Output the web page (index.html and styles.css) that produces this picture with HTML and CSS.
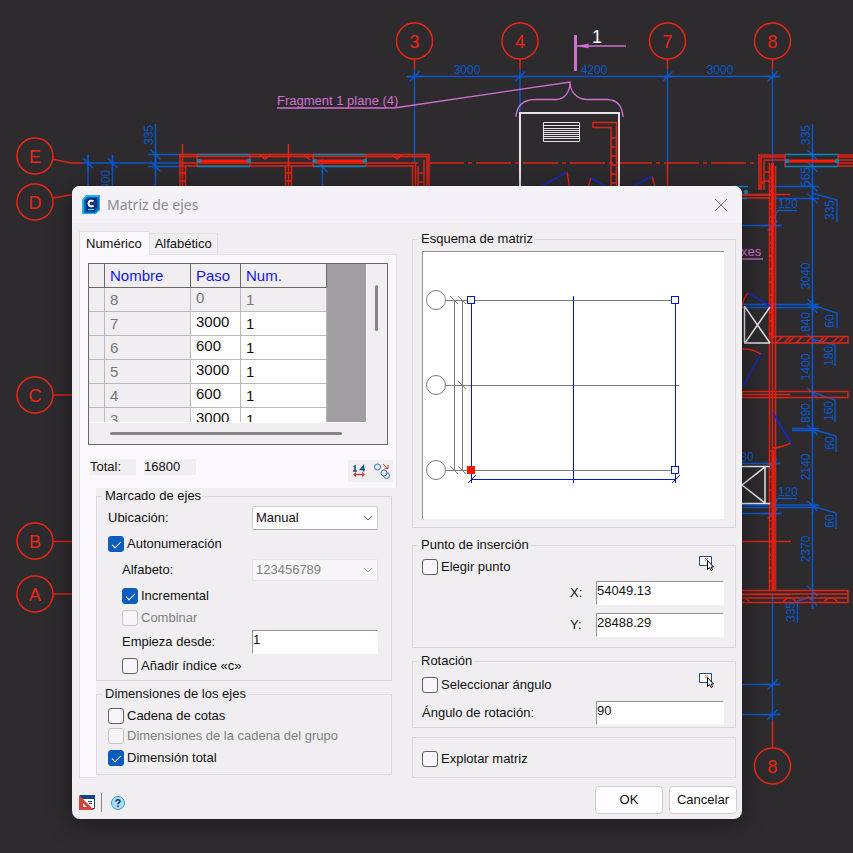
FILE: index.html
```html
<!DOCTYPE html>
<html lang="es">
<head>
    <meta charset="UTF-8">
    <meta name="viewport" content="width=device-width, initial-scale=1.0">
    <title>Matriz de ejes</title>
    <link rel="stylesheet" href="styles.css">
</head>
<body>

    <!-- Floor plan behind the dialog -->
    <svg class="drawing" viewBox="0 0 853 853" preserveAspectRatio="xMinYMin slice" aria-hidden="true">
        <defs>
            <path id="tick" d="M-5 5L5 -5M-8 0H8"/>
            <path id="tickv" d="M-5 -5L5 5M0 -8V8"/>
            <pattern id="hatch" width="13" height="13" patternUnits="userSpaceOnUse">
                <path d="M0 0H4M0 9H4" class="wall"/>
            </pattern>
        </defs>

        <!-- vertical and horizontal dimension lines -->
        <g class="dim">
            <path d="M407 76.500H780M414.500 69V163M520 69V113M667.500 69V163M772.500 69V163M772.500 594V721"/>
            <path d="M81 163H180M88 155V190M112.500 155V190M155.500 124V190M148 154.500H180M148 166.500H180M322.500 163V190"/>
            <path d="M742 195H772M770 186.500H819M772 198.500H819M742 225.500H782M812.500 124V609M742 304.500H819M742 307.500H819"/>
            <path d="M812 193L837 200V222M812 305L837 313V328M812 339L835 345V366M812 392L835 400V422M812 429L836 436V452M812 506L836 513V529"/>
            <path d="M792 428.500H819M792 430.500H816M742 463.500H777M742 505H819M742 507.500H819M742 513.500H782"/>
            <path d="M772 222L778 210.500H797M772 513L777 498.500H797M797.500 601V623M797 601L812 597"/>
            <path d="M742 684.500H780M742 714.500H780"/>
            <use href="#tick" x="414.500" y="76.500"/>
            <use href="#tick" x="520" y="76.500"/>
            <use href="#tick" x="667.500" y="76.500"/>
            <use href="#tick" x="772.500" y="76.500"/>
            <use href="#tick" x="772.500" y="225.500"/>
            <use href="#tick" x="772.500" y="513.500"/>
            <use href="#tick" x="772.500" y="684.500"/>
            <use href="#tick" x="772.500" y="714.500"/>
            <use href="#tick" x="772.500" y="463.500"/>
            <use href="#tickv" x="88" y="163"/>
            <use href="#tickv" x="112.500" y="163"/>
            <use href="#tickv" x="155.500" y="154.500"/>
            <use href="#tickv" x="155.500" y="166.500"/>
            <use href="#tickv" x="322.500" y="167"/>
            <use href="#tickv" x="812.500" y="155"/>
            <use href="#tickv" x="812.500" y="167"/>
            <use href="#tickv" x="812.500" y="186.500"/>
            <use href="#tickv" x="812.500" y="198.500"/>
            <use href="#tickv" x="812.500" y="304"/>
            <use href="#tickv" x="812.500" y="308"/>
            <use href="#tickv" x="812.500" y="339"/>
            <use href="#tickv" x="812.500" y="393"/>
            <use href="#tickv" x="812.500" y="430"/>
            <use href="#tickv" x="812.500" y="506"/>
            <use href="#tickv" x="812.500" y="591"/>
            <use href="#tickv" x="812.500" y="601"/>
        </g>

        <!-- walls -->
        <g class="wall">
            <path class="axis" d="M52 159L71 163H82"/>
            <path d="M53 198L76 194M53 395H76M53 541.500H76M53 594H76"/>
            <path d="M179 154.500H429V190M179 156.500H427V190M179 163H418M179 166H414M180 154V190M182.500 144V190M185.500 166V190"/>
            <path d="M197 154V167M250 154V167M288.500 144V190M285.500 166V190M291.500 166V190M313 154V167M366 154V167"/>
            <path d="M179 173H186M179 181H186M285 173H292M285 181H292M412.500 166V190M415.500 163V190M418 166V190M424 160V190M418 173H424M418 182H424"/>
            <path d="M260 155L265 159L270 155M304 155L310 160M392 155L397 159L402 155"/>
            <path d="M414.500 59V69M520 59V69M667.500 59V69M772.500 59V69M667.500 163V190M772.500 721V748"/>
            <path stroke-dasharray="35 4 4 4" d="M429 163H759"/>
            <path d="M759 190V155H785M761 190V157H785M764 190V160H784M768 195H742M764 172H770M764 181H770M759 188L764 180M742 198H769M742 194.500H790"/>
            <path d="M785 154V167M838 154V167M838 155H853M838 157H853M838 160H853M838 163H853M838 166H853"/>
            <path class="wall-heavy" d="M772.500 163V338M773 450V590"/>
            <path d="M769.500 163V590M775.500 166V590M772.500 338V450"/>
            <path d="M593 122.500H616.500V190M594 127.500H611V190M593 122V128M611 138H616M611 147H616M611 156H616M611 165H616M611 174H616M611 183H616"/>
            <path d="M772 336.500H848V343H772ZM742 391.500H848V397.500H742ZM742 394.500H790M742 541.500H791"/>
            <path d="M742 590.500H848V602.500H742M742 594H848M742 598H848M742 594.500H790"/>
            <path d="M776 343L782 337M784 343L790 337M788 343L794 337M796 343L802 337M806 343L812 337M818 343L824 337M822 343L828 337M832 343L838 337M838 343L844 337"/>
            <path d="M745 598L750 602M783 602L787 598H792L796 602M824 602L828 598H833L838 602"/>
            <path d="M742 308Q743 298 748 293M743 349Q753 349 761 354M773 448Q783 447 791 443M567 172L570 190M587 190L591 178M652 176L656 190"/>
            <path class="glazing-bar" d="M199 161H248M315 161H364M787 161H836"/>
        </g>
        <g fill="url(#hatch)">
            <path d="M770 166H776V338H770ZM770 450H776V590H770Z"/>
        </g>

        <!-- windows and doors -->
        <g class="window">
            <path d="M197 154.500H250M197 166.500H250M313 154.500H366M313 166.500H366M785 154.500H838M785 166.500H838M734 186.500H748M742 198.500H747"/>
            <circle cx="199" cy="161" r="1.500"/>
            <circle cx="249" cy="161" r="1.500"/>
            <circle cx="315" cy="161" r="1.500"/>
            <circle cx="365" cy="161" r="1.500"/>
            <circle cx="787" cy="161" r="1.500"/>
            <circle cx="837" cy="161" r="1.500"/>
            <circle cx="746" cy="192" r="1.500"/>
        </g>
        <path class="door" d="M540 187L567 172M591 178L612 190M630 188L652 176M748 293L770 306M761 354L743 386M773 413L791 443"/>
        <g class="fixture">
            <path stroke-width="2" d="M520 190V113H619V190"/>
            <path d="M543.500 122.500H579.500V141.500H543.500ZM543 125.500H580M543 128.500H580M543 130.500H580M543 132.500H580M543 134.500H580M543 136.500H580M543 138.500H580"/>
            <path stroke-width="1.500" d="M744.500 306V342M744 343H770M745 307L770 343M770 307L745 343"/>
            <path stroke-width="1.500" d="M742 466.500H770M765 467V503M742 503.500H770M765 467L742 485L765 503"/>
        </g>

        <!-- notes -->
        <g class="note">
            <path d="M277 108H394L570 82C570 92 565 99 556 99.500H535Q517 100 516 117M570 82C570 92 577 99 586 99.500H607Q622 100 623 117"/>
            <path stroke-width="3" d="M575.500 35V71"/>
            <path d="M577 46H626"/>
            <path fill="#d06fd0" d="M579 46L588 44.500V47.500Z"/>
            <path d="M742 259H763"/>
        </g>
        <text class="note-text" x="277" y="105">Fragment 1 plane (4)</text>
        <text class="note-text" x="741" y="256">xes</text>
        <text class="section-text" x="597" y="43">1</text>

        <!-- dimension values -->
        <g class="dim-text">
            <text x="467" y="74">3000</text>
            <text x="594" y="74">4200</text>
            <text x="720" y="74">3000</text>
            <text x="788" y="208">120</text>
            <text x="788" y="496">120</text>
            <text x="747" y="461">80</text>
            <text transform="translate(153 135) rotate(-90)">335</text>
            <text transform="translate(110 180) rotate(-90)">900</text>
            <text transform="translate(810 135) rotate(-90)">335</text>
            <text transform="translate(810 177) rotate(-90)">565</text>
            <text transform="translate(834 210) rotate(-90)">335</text>
            <text transform="translate(810 276) rotate(-90)">3040</text>
            <text transform="translate(834 321) rotate(-90)">60</text>
            <text transform="translate(810 322) rotate(-90)">840</text>
            <text transform="translate(833 356) rotate(-90)">180</text>
            <text transform="translate(810 367) rotate(-90)">1400</text>
            <text transform="translate(833 411) rotate(-90)">160</text>
            <text transform="translate(810 413) rotate(-90)">890</text>
            <text transform="translate(834 443) rotate(-90)">60</text>
            <text transform="translate(810 467) rotate(-90)">2140</text>
            <text transform="translate(834 521) rotate(-90)">60</text>
            <text transform="translate(810 549) rotate(-90)">2370</text>
            <text transform="translate(795 612) rotate(-90)">335</text>
        </g>

        <!-- axis bubbles -->
        <g class="bubble">
            <circle cx="414.500" cy="41" r="18"/>
            <circle cx="520" cy="41" r="18"/>
            <circle cx="667.500" cy="41" r="18"/>
            <circle cx="772.500" cy="41" r="18"/>
            <circle cx="35" cy="156" r="18"/>
            <circle cx="35" cy="202" r="18"/>
            <circle cx="35" cy="395" r="18"/>
            <circle cx="35" cy="541" r="18"/>
            <circle cx="35" cy="594" r="18"/>
            <circle cx="772.500" cy="766" r="18"/>
        </g>
        <g class="bubble-text">
            <text x="414.500" y="48">3</text>
            <text x="520" y="48">4</text>
            <text x="667.500" y="48">7</text>
            <text x="772.500" y="48">8</text>
            <text x="35" y="163">E</text>
            <text x="35" y="209">D</text>
            <text x="35" y="402">C</text>
            <text x="35" y="548">B</text>
            <text x="35" y="601">A</text>
            <text x="772.500" y="773">8</text>
        </g>
    </svg>

    <main class="desktop">
        <form class="dialog" id="axisForm">

            <header class="titlebar">
                <svg class="app-icon" viewBox="0 0 18 19" aria-hidden="true">
                    <path fill="#19b5e5" d="M4 0H18V15L14 19H0V5Z"/>
                    <path fill="#0a5fb4" d="M5 2H17V14L13 18H2V5Z"/>
                    <path fill="#0a2f86" d="M6 3H15V13L12 16H4V6Z"/>
                    <path fill="none" stroke="#fff" stroke-width="2" d="M11.500 6.500C10 5 6.500 5.500 6.500 8.500S10 12 11.500 10.500"/>
                    <path stroke="#5ad1f0" d="M6 14.500H12"/>
                </svg>
                <h1>Matriz de ejes</h1>
                <button type="button" class="close" aria-label="Cerrar">
                    <svg viewBox="0 0 12 12"><path d="M0 0L12 12M12 0L0 12"/></svg>
                </button>
            </header>

            <div class="columns">
                <section class="left">
                    <div class="tabs" role="tablist">
                        <button type="button" role="tab" class="tab active" aria-selected="true">Numérico</button>
                        <button type="button" role="tab" class="tab" aria-selected="false">Alfabético</button>
                    </div>

                    <div class="panel">
                        <div class="panel-top">
                            <div class="grid-box">
                                <div class="grid-view">
                                    <table class="axes">
                                        <colgroup><col class="col-mark"><col class="col-name"><col class="col-step"><col class="col-num"></colgroup>
                                        <thead>
                                            <tr><th></th><th>Nombre</th><th>Paso</th><th>Num.</th></tr>
                                        </thead>
                                        <tbody>
                                            <tr class="locked"><td></td><td>8</td><td>0</td><td>1</td></tr>
                                            <tr><td></td><td>7</td><td>3000</td><td>1</td></tr>
                                            <tr><td></td><td>6</td><td>600</td><td>1</td></tr>
                                            <tr><td></td><td>5</td><td>3000</td><td>1</td></tr>
                                            <tr><td></td><td>4</td><td>600</td><td>1</td></tr>
                                            <tr><td></td><td>3</td><td>3000</td><td>1</td></tr>
                                        </tbody>
                                    </table>
                                </div>
                                <div class="scroll-y"><span class="thumb"></span></div>
                                <div class="scroll-x"><span class="thumb"></span></div>
                            </div>

                            <div class="total">
                                <span class="total-label">Total:</span>
                                <output class="total-value">16800</output>
                                <div class="tools">
                                    <button type="button" aria-label="Medir">
                                        <svg viewBox="0 0 16 16">
                                            <path fill="none" stroke="#1d4f80" stroke-width="1.500" d="M2.500 4L4 3V8M2 8H6M12.500 8.500V3L9.500 6.500H14"/>
                                            <path stroke="#c9433a" stroke-width="1.500" d="M4 11.500H12"/>
                                            <path fill="#c9433a" d="M2 11.500L5 9V14ZM14 11.500L11 9V14Z"/>
                                        </svg>
                                    </button>
                                    <button type="button" aria-label="Renumerar">
                                        <svg viewBox="0 0 16 16">
                                            <g fill="#e3edf8" stroke="#44719f">
                                                <circle cx="3.500" cy="4" r="3"/>
                                                <circle cx="12.500" cy="12.500" r="3"/>
                                                <circle cx="10" cy="10" r="3"/>
                                            </g>
                                            <path fill="none" stroke="#c9433a" d="M9 1L14 5.500M14 2V5.500H10.500"/>
                                        </svg>
                                    </button>
                                </div>
                            </div>
                        </div>

                        <div class="panel-groups">
                            <fieldset class="group marks">
                                <legend>Marcado de ejes</legend>
                                <div class="row">
                                    <label for="location">Ubicación:</label>
                                    <span class="select">
                                        <select id="location"><option>Manual</option></select>
                                        <svg viewBox="0 0 10 6"><path d="M1 1L5 5L9 1"/></svg>
                                    </span>
                                </div>
                                <div class="row">
                                    <input type="checkbox" id="autonum" checked>
                                    <label for="autonum">Autonumeración</label>
                                </div>
                                <div class="row indent">
                                    <label for="alphabet">Alfabeto:</label>
                                    <span class="select">
                                        <select id="alphabet" disabled><option>123456789</option></select>
                                        <svg viewBox="0 0 10 6"><path d="M1 1L5 5L9 1"/></svg>
                                    </span>
                                </div>
                                <div class="row indent">
                                    <input type="checkbox" id="incremental" checked>
                                    <label for="incremental">Incremental</label>
                                </div>
                                <div class="row indent tight">
                                    <input type="checkbox" id="combine" disabled>
                                    <label for="combine">Combinar</label>
                                </div>
                                <div class="row indent tall">
                                    <label for="start">Empieza desde:</label>
                                    <input type="text" id="start" value="1">
                                </div>
                                <div class="row indent tight">
                                    <input type="checkbox" id="suffix">
                                    <label for="suffix">Añadir índice «c»</label>
                                </div>
                            </fieldset>

                            <fieldset class="group sizes">
                                <legend>Dimensiones de los ejes</legend>
                                <div class="row">
                                    <input type="checkbox" id="chain">
                                    <label for="chain">Cadena de cotas</label>
                                </div>
                                <div class="row">
                                    <input type="checkbox" id="groupChain" disabled>
                                    <label for="groupChain">Dimensiones de la cadena del grupo</label>
                                </div>
                                <div class="row last">
                                    <input type="checkbox" id="totalSize" checked>
                                    <label for="totalSize">Dimensión total</label>
                                </div>
                            </fieldset>
                        </div>
                    </div>
                </section>

                <section class="right">
                    <fieldset class="group scheme">
                        <legend>Esquema de matriz</legend>
                        <div class="preview">
                            <svg viewBox="0 0 301 267" preserveAspectRatio="xMinYMin meet" role="img" aria-label="Esquema de matriz">
                                <g class="scheme-gray">
                                    <circle cx="13" cy="48" r="9.500"/>
                                    <circle cx="13" cy="133" r="9.500"/>
                                    <circle cx="13" cy="218" r="9.500"/>
                                    <path d="M23 48.500H252M23 133.500H256M23 218.500H252M31.500 48V218M39.500 48V218"/>
                                    <path d="M27 44L35 52M35 44L43 52M35 129L43 137M27 214L35 222M35 214L43 222"/>
                                </g>
                                <path class="scheme-blue" d="M48.500 48V231M150.500 44V231M252.500 48V231M48 227.500H253M45 231L53 223M249 231L257 223"/>
                                <g class="scheme-grip">
                                    <rect x="44.500" y="44.500" width="7" height="7"/>
                                    <rect x="248.500" y="44.500" width="7" height="7"/>
                                    <rect x="248.500" y="214.500" width="7" height="7"/>
                                    <rect class="base" x="44.500" y="214.500" width="7" height="7"/>
                                </g>
                            </svg>
                        </div>
                    </fieldset>

                    <fieldset class="group insertion">
                        <legend>Punto de inserción</legend>
                        <div class="row pick-row">
                            <input type="checkbox" id="pickPoint">
                            <label for="pickPoint">Elegir punto</label>
                            <button type="button" class="pick" aria-label="Elegir punto en pantalla">
                                <svg viewBox="0 0 16 16">
                                    <path fill="#fff" stroke="#1d4f8f" d="M.5 .5H12.500V9.500H.5Z"/>
                                    <path stroke="#c9433a" stroke-width=".8" d="M6 2L9 5M9 2L6 5"/>
                                    <path fill="#fff" stroke="#000" d="M8.500 4.500V13.500L10.500 11.500L12 14.500L13.500 13.800L12.200 11H14.500Z"/>
                                </svg>
                            </button>
                        </div>
                        <div class="row field">
                            <label for="posX">X:</label>
                            <input type="text" id="posX" value="54049.13">
                        </div>
                        <div class="row field">
                            <label for="posY">Y:</label>
                            <input type="text" id="posY" value="28488.29">
                        </div>
                    </fieldset>

                    <fieldset class="group rotation">
                        <legend>Rotación</legend>
                        <div class="row pick-row">
                            <input type="checkbox" id="pickAngle">
                            <label for="pickAngle">Seleccionar ángulo</label>
                            <button type="button" class="pick" aria-label="Elegir ángulo en pantalla">
                                <svg viewBox="0 0 16 16">
                                    <path fill="#fff" stroke="#1d4f8f" d="M.5 .5H12.500V9.500H.5Z"/>
                                    <path stroke="#c9433a" stroke-width=".8" d="M6 2L9 5M9 2L6 5"/>
                                    <path fill="#fff" stroke="#000" d="M8.500 4.500V13.500L10.500 11.500L12 14.500L13.500 13.800L12.200 11H14.500Z"/>
                                </svg>
                            </button>
                        </div>
                        <div class="row">
                            <label for="angle">Ángulo de rotación:</label>
                            <input type="text" id="angle" value="90">
                        </div>
                    </fieldset>

                    <div class="group explode">
                        <input type="checkbox" id="explode">
                        <label for="explode">Explotar matriz</label>
                    </div>
                </section>
            </div>

            <footer class="footer">
                <button type="button" class="icon-button" aria-label="Configuración">
                    <svg viewBox="0 0 16 16">
                        <path fill="#fff" stroke="#17457d" d="M1.500 .5H15.500V13.500H1.500Z"/>
                        <path fill="#17457d" d="M1 0H16V4H1Z"/>
                        <path stroke="#17457d" d="M9 6.500H13M10 8.500H13"/>
                        <path fill="#c9473d" d="M0 0L15 15H0Z"/>
                        <path fill="#f0d9d6" d="M4 8L8 12H4Z"/>
                    </svg>
                </button>
                <span class="divider"></span>
                <button type="button" class="icon-button" aria-label="Ayuda">
                    <svg viewBox="0 0 16 16">
                        <circle cx="8" cy="8" r="6.500" fill="#a9dcfa" stroke="#4a93bd"/>
                        <path fill="none" stroke="#16344c" stroke-width="1.500" d="M6 6.500C6 4.200 10 4.200 10 6.300C10 7.700 8 7.500 8 9.300M8 10.500V12"/>
                    </svg>
                </button>
                <button type="submit" class="button ok">OK</button>
                <button type="button" class="button">Cancelar</button>
            </footer>
        </form>
    </main>

</body>
</html>
```

FILE: styles.css
```css
* {
    box-sizing: border-box;
}
body {
    font-family: "Liberation Sans", Arial, sans-serif;
    font-size: 13px;
    line-height: 16px;
    color: #111;
    background-color: #2d2b2e;
    margin: 0;
}
button,
input,
select {
    font: inherit;
    color: inherit;
    margin: 0;
}
button {
    background: none;
    border: none;
    padding: 0;
}
svg {
    display: block;
}

/* Floor plan */
.drawing {
    position: absolute;
    top: 0;
    left: 0;
    width: 100%;
    height: 100%;
    text-anchor: middle;
}
.dim {
    fill: none;
    stroke: #0a58cc;
    stroke-width: 1.4;
}
.wall {
    fill: none;
    stroke: #e02414;
    stroke-width: 1.5;
}
.wall-heavy {
    stroke: #f51b0a;
    stroke-width: 3;
}
.glazing-bar {
    stroke: #ff1a08;
    stroke-width: 3;
}
.window {
    fill: #0b84b8;
    stroke: #0b84b8;
    stroke-width: 1.5;
}
.door {
    fill: none;
    stroke: #1428cc;
    stroke-width: 1.5;
}
.fixture {
    fill: none;
    stroke: #e4e4e4;
}
.note {
    fill: none;
    stroke: #d06fd0;
    stroke-width: 1.3;
}
.note-text {
    fill: #d06fd0;
    font-size: 13px;
    text-anchor: start;
}
.section-text {
    fill: #fff;
    font-size: 18px;
}
.dim-text {
    fill: #0a58cc;
    font-size: 12px;
}
.bubble {
    fill: none;
    stroke: #ec2614;
    stroke-width: 1.5;
}
.bubble-text {
    fill: #ec2614;
    font-size: 18px;
}

/* Dialog window */
.desktop {
    position: relative;
    padding: 186px 111px 34px 72px;
}
.dialog {
    background-color: #f0eef1;
    border-radius: 8px;
    box-shadow: 0 4px 24px rgba(0, 0, 0, 0.4);
    overflow: hidden;
}
.titlebar {
    display: flex;
    align-items: center;
    height: 37px;
    padding: 0 15px 0 10px;
    background-color: #f4f2f6;
}
.app-icon {
    width: 18px;
    height: 19px;
}
.titlebar h1 {
    flex: 1;
    margin: 0 0 0 7px;
    font-family: "Noto Sans", "Open Sans", sans-serif;
    font-size: 14px;
    font-weight: normal;
    color: #8c8a8e;
}
.close svg {
    width: 12px;
    height: 12px;
    overflow: visible;
    stroke: #777;
}
.columns {
    display: grid;
    grid-template-columns: minmax(0, 318fr) minmax(0, 324fr);
    column-gap: 15px;
    padding: 8px 6px 0 7px;
}

/* Tabs */
.left {
    display: flex;
    flex-direction: column;
}
.tabs {
    display: flex;
    align-items: flex-end;
    height: 23px;
}
.tab {
    height: 21px;
    padding: 0 5px;
    border: 1px solid #e2e0e4;
    border-left: none;
    border-bottom: none;
}
.tab.active {
    height: 24px;
    padding: 0 7px 0 6px;
    margin-bottom: -1px;
    border-left: 1px solid #e2e0e4;
    background-color: #faf8fc;
    position: relative;
}
.panel {
    display: flex;
    flex-direction: column;
    flex: 1;
    border: 1px solid #e2e0e4;
    border-right: none;
    background-color: #faf8fc;
}
.panel-top {
    padding: 8px 8px 6px;
    border-right: 1px solid #e2e0e4;
}
.panel-groups {
    flex: 1;
    margin: 0 0 -1px 16px;
    padding-right: 5px;
    background-color: #f0eef1;
}

/* Axis table */
.grid-box {
    display: grid;
    grid-template-columns: 1fr 21px;
    grid-template-rows: 159px 21px;
    border: 1px solid #69676a;
    background-color: #f0eef1;
}
.grid-view {
    overflow: hidden;
    background-color: #a09ea1;
    border-bottom: 1px solid #fff;
}
.axes {
    width: 238px;
    table-layout: fixed;
    border-collapse: separate;
    border-spacing: 0;
    font-size: 15px;
}
.col-mark {
    width: 16px;
}
.col-name {
    width: 86px;
}
.col-step {
    width: 50px;
}
.axes th {
    height: 24px;
    padding: 0 0 0 5px;
    font-weight: normal;
    text-align: left;
    color: #1414f0;
    background-color: #f0eef1;
    border-right: 1px solid #69676a;
    border-bottom: 1px solid #69676a;
}
.axes td {
    height: 24px;
    padding: 0 0 0 5px;
    background-color: #fff;
    border-right: 1px solid #bab8bb;
    border-bottom: 1px solid #bab8bb;
}
.axes td:nth-child(-n+2),
.axes .locked td {
    color: #777;
    background-color: #f0eef1;
}
.axes td:nth-child(3) {
    padding: 0 0 3px 5px;
}
.scroll-y {
    padding: 21px 0 0 8px;
    border-left: 1px solid #fff;
}
.scroll-y .thumb {
    display: block;
    width: 3px;
    height: 46px;
    border-radius: 2px;
    background-color: #868487;
}
.scroll-x {
    padding: 9px 24px 0 21px;
}
.scroll-x .thumb {
    display: block;
    height: 3px;
    border-radius: 2px;
    background-color: #868487;
}
.total {
    display: flex;
    align-items: flex-start;
    padding: 14px 0 0 2px;
}
.total-label,
.total-value {
    width: 46px;
    background-color: #f0eef1;
}
.total-value {
    width: 52px;
    margin-left: 8px;
}
.tools {
    display: flex;
    gap: 7px;
    margin: 1px -5px 0 auto;
    padding: 3px;
    background-color: #f0eef1;
}
.tools svg {
    width: 16px;
    height: 16px;
}

/* Groups and form rows */
.group {
    min-width: 0;
    margin: 0;
    padding: 1px 13px 5px 11px;
    border: 1px solid #dad8dc;
}
legend {
    padding: 0 2px 0 3px;
    margin-left: -6px;
}
.row {
    display: flex;
    align-items: center;
    height: 26px;
    gap: 3px;
}
.row .select,
.row input[type="text"] {
    width: 126px;
    margin-left: auto;
}
.indent {
    padding-left: 14px;
}
.tight {
    height: 18px;
}
.tall {
    height: 30px;
}
input[type="checkbox"] {
    appearance: none;
    flex: none;
    width: 16px;
    height: 16px;
    border: 1px solid #636164;
    border-radius: 3px;
    background-color: #f7f5f8;
}
input[type="checkbox"]:checked {
    border-color: #0a5cbf;
    background-color: #0a5cbf;
}
input[type="checkbox"]:checked::after {
    content: "";
    display: block;
    width: 8px;
    height: 4px;
    margin: 4px 3px;
    border-left: 1px solid #fff;
    border-bottom: 1px solid #fff;
    transform: rotate(-45deg);
}
input[type="checkbox"]:disabled {
    border-color: #c6c4c8;
}
input:disabled + label {
    color: #828084;
}
input[type="text"] {
    height: 24px;
    padding: 0 0 6px;
    border: 1px solid #fff;
    border-top-color: #949296;
    border-left-color: #949296;
    border-radius: 0;
    background-color: #fff;
}
.select {
    position: relative;
}
.select select {
    appearance: none;
    display: block;
    width: 100%;
    height: 24px;
    padding: 0 24px 0 3px;
    border: 1px solid #cfcdd1;
    border-bottom-color: #aaa8ac;
    border-radius: 2px;
    background-color: #fdfcfe;
}
.select select:disabled {
    height: 22px;
    color: #828084;
    opacity: 1;
    border-color: #e5e3e7;
    background-color: #f7f5f8;
}
.select svg {
    position: absolute;
    top: 50%;
    right: 5px;
    width: 10px;
    height: 6px;
    margin-top: -3px;
    fill: none;
    stroke: #555;
    pointer-events: none;
}
.select select:disabled + svg {
    stroke: #aaa;
}
.sizes {
    margin-top: 5px;
    padding: 4px 11px;
}
.sizes .row {
    height: 20px;
}
.sizes .last {
    height: 24px;
}

/* Right column */
.right .group {
    padding-left: 9px;
    padding-right: 11px;
}
.right legend {
    margin-left: -4px;
}
.right .scheme {
    padding-top: 4px;
    padding-bottom: 8px;
}
.preview {
    height: 268px;
    background-color: #fff;
    border-top: 1px solid #949296;
    border-left: 1px solid #949296;
}
.preview svg {
    width: 100%;
}
.scheme-gray {
    fill: none;
    stroke: #7c7c7c;
}
.scheme-blue {
    fill: none;
    stroke: #0014e6;
}
.scheme-grip {
    fill: #fff;
    stroke: #0014e6;
}
.scheme-grip .base {
    fill: #ff1400;
    stroke: #ff1400;
}
.right .insertion {
    margin-top: 9px;
    padding-top: 0;
    padding-bottom: 10px;
}
.right .row {
    height: 24px;
}
.right .row input[type="text"] {
    width: 128px;
}
.right .pick-row {
    height: 28px;
}
.pick {
    margin-left: auto;
    margin-right: 9px;
    padding-bottom: 6px;
}
.pick svg {
    width: 16px;
    height: 16px;
}
.field {
    justify-content: flex-end;
    gap: 0;
}
.field + .field {
    margin-top: 8px;
}
.field label {
    width: 26px;
}
.right .field input[type="text"] {
    margin-left: 0;
}
.right .rotation {
    margin-top: 5px;
    padding-top: 0;
    padding-bottom: 2px;
}
.right .rotation .pick-row {
    height: 32px;
}
.right .rotation .pick {
    padding-bottom: 8px;
}
.right .explode {
    display: flex;
    align-items: center;
    gap: 3px;
    height: 41px;
    margin-top: 9px;
    padding-top: 3px;
    padding-bottom: 0;
}

/* Footer */
.footer {
    display: flex;
    align-items: center;
    padding: 8px 5px 5px 7px;
}
.icon-button svg {
    width: 16px;
    height: 16px;
}
.divider {
    width: 1px;
    height: 19px;
    margin: 0 8px 0 6px;
    background-color: #888;
}
.icon-button,
.divider {
    margin-top: 5px;
}
.button {
    width: 68px;
    height: 28px;
    border: 1px solid #cfcdd1;
    border-radius: 4px;
    background-color: #fdfcfe;
}
.ok {
    margin-left: auto;
    margin-right: 6px;
}
```
